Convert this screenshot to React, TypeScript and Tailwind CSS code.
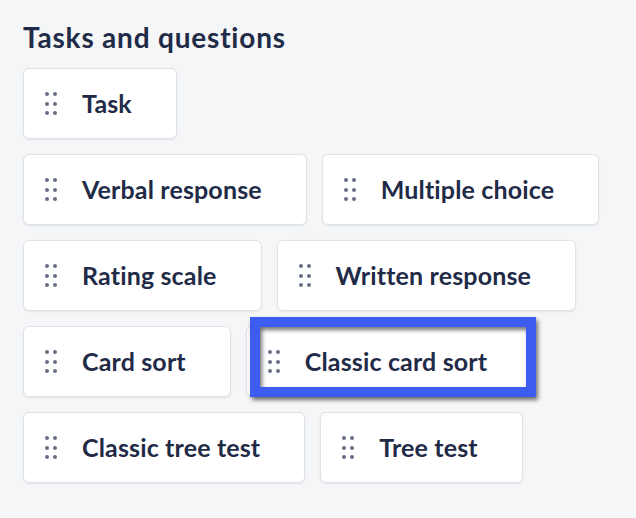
const rows: string[][] = [
  ['Task'],
  ['Verbal response', 'Multiple choice'],
  ['Rating scale', 'Written response'],
  ['Card sort', 'Classic card sort'],
  ['Classic tree test', 'Tree test'],
];

function DragDots() {
  return (
    <div className="grid grid-cols-2 gap-x-1 gap-y-[5.5px] shrink-0">
      {Array.from({ length: 6 }).map((_, i) => (
        <span key={i} className="w-1 h-1 rounded-full bg-[#667085]" />
      ))}
    </div>
  );
}

function Card({ label, selected }: { label: string; selected?: boolean }) {
  return (
    <div className="relative">
      <div className="flex items-center gap-[25px] h-[71px] pl-[21px] pr-[44px] bg-white border border-[#dfe2e7] rounded-md shadow-[0_1px_2px_rgba(16,24,40,0.08)]">
        <DragDots />
        <span className="text-[25px] tracking-[0.15px] font-bold text-[#1f2b47] whitespace-nowrap">{label}</span>
      </div>
      {selected && (
        <div className="absolute left-1 -right-1 -top-[9px] bottom-0 border-[10px] border-[#3d5cf0] drop-shadow-[2px_3px_2px_rgba(0,0,0,0.55)]" />
      )}
    </div>
  );
}

export default function App() {
  return (
    <div className="min-h-screen bg-[#f5f6f8] px-[23px] pt-[20px] font-['Lato',sans-serif]">
      <h2 className="text-[28px] tracking-[0.8px] leading-[34px] font-bold text-[#1f2b47] mb-[14px]">Tasks and questions</h2>
      <div className="flex flex-col gap-[15px]">
        {rows.map((row, i) => (
          <div key={i} className="flex gap-[15px]">
            {row.map((label) => (
              <Card key={label} label={label} selected={label === 'Classic card sort'} />
            ))}
          </div>
        ))}
      </div>
    </div>
  );
}
